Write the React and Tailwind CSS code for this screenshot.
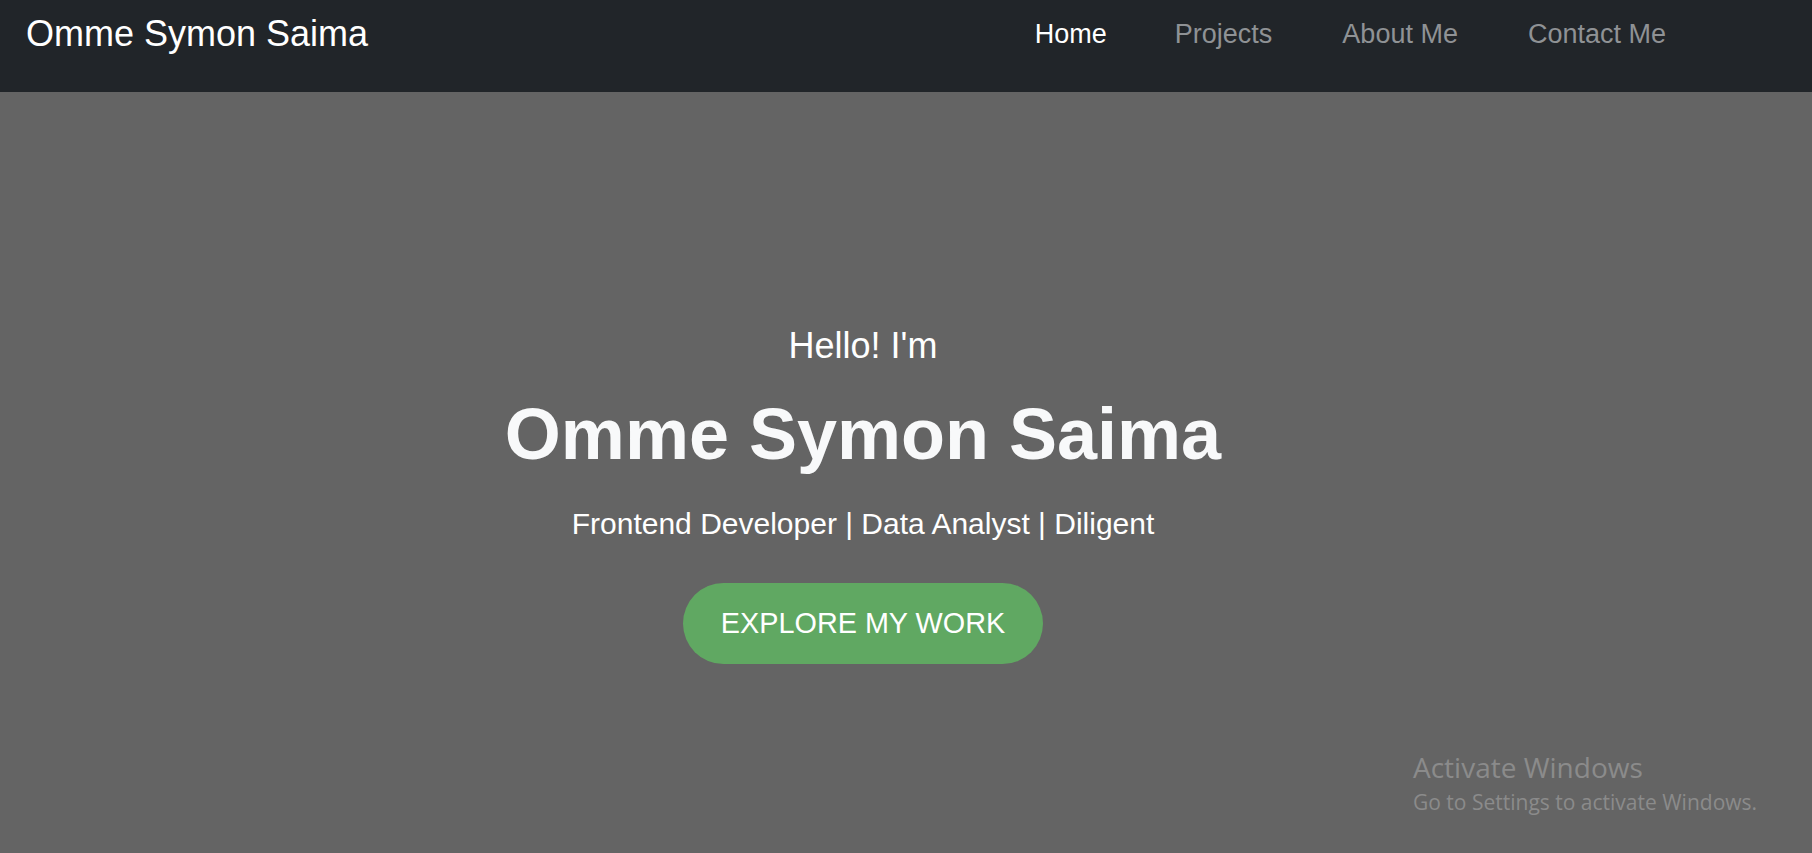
import React from "react";

const links = [
  { label: "Home", active: true },
  { label: "Projects" },
  { label: "About Me" },
  { label: "Contact Me" },
];

const App = () => {
  return (
    <div className="relative min-h-[853px] bg-[#646464] font-['Liberation_Sans',Arial,sans-serif] overflow-hidden">
      {/* Navbar */}
      <nav className="h-[92px] bg-[#212529] flex items-start justify-between">
        <a className="ml-[26px] mt-[14px] text-[36px] leading-[40px] text-white">
          Omme Symon Saima
        </a>
        <ul className="mr-[146px] mt-[18px] flex gap-[70px] text-[27px] leading-[32px]">
          {links.map((l) => (
            <li key={l.label} className={l.active ? "mr-[-2px]" : ""}>
              <a className={l.active ? "text-white" : "text-[#8f9295]"}>
                {l.label}
              </a>
            </li>
          ))}
        </ul>
      </nav>

      {/* Hero */}
      <main className="flex flex-col items-center pt-[234px] pr-[86px] text-center">
        <p className="text-[36px] leading-[40px] text-white">Hello! I'm</p>
        <h1 className="mt-[28px] text-[72px] leading-[80px] font-bold text-[#f8f9fa]">
          Omme Symon Saima
        </h1>
        <p className="mt-[32px] text-[30px] leading-[36px] text-white">
          Frontend Developer | Data Analyst | Diligent
        </p>
        <button className="mt-[41px] h-[81px] px-[38px] rounded-full bg-[#60a862] text-white text-[28.8px] flex items-center">
          EXPLORE MY WORK
        </button>
      </main>

      {/* Windows watermark */}
      <div className="absolute left-[1413px] top-[751px] font-['Open_Sans',sans-serif] text-[#8b8b8b] pointer-events-none">
        <div className="text-[28px] leading-[32px]">Activate Windows</div>
        <div className="mt-[5px] text-[21px] leading-[28px]">
          Go to Settings to activate Windows.
        </div>
      </div>
    </div>
  );
};

export default App;
